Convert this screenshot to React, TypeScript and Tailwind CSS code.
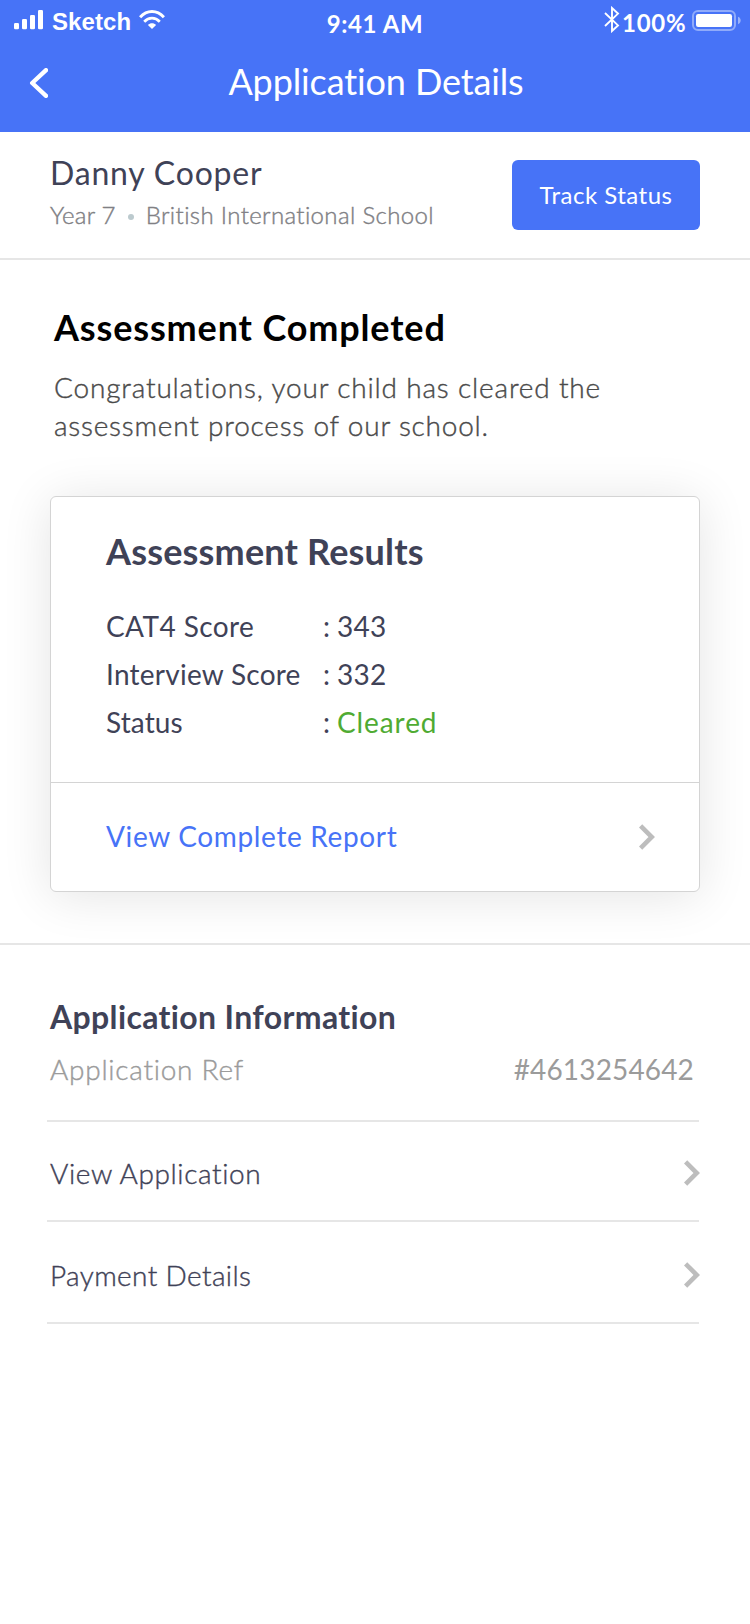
function ChevronRight() {
  return (
    <svg className="block h-[26px] w-4 shrink-0" viewBox="0 0 16 26" fill="none">
      <path d="M1.6 1.8L12.8 13L1.6 24.2" stroke="#bdbdbd" strokeWidth="4.6" />
    </svg>
  );
}

function SignalIcon() {
  return (
    <svg className="mt-[10px] block h-5 w-[30px]" viewBox="0 0 30 20" fill="#fff">
      <rect x="0" y="13" width="5" height="6.3" rx="1.2" />
      <rect x="8" y="9" width="5" height="10.3" rx="1.2" />
      <rect x="16" y="5" width="5" height="14.3" rx="1.2" />
      <rect x="24" y="0" width="5" height="19.3" rx="1.2" />
    </svg>
  );
}

function WifiIcon() {
  return (
    <svg className="mt-[10px] block h-5 w-[26px]" viewBox="0 0 26 20" fill="none">
      <path d="M1.1 7.3C8 -0.4 18 -0.4 24.9 7.3" stroke="#fff" strokeWidth="2.9" />
      <path d="M5.2 11.8C9.8 7 16.2 7 20.8 11.8" stroke="#fff" strokeWidth="2.7" />
      <path d="M8.9 15C11.2 12.5 14.8 12.5 17.1 15L13 19Z" fill="#fff" />
    </svg>
  );
}

function BluetoothIcon() {
  return (
    <svg className="mt-[6px] block h-[27px] w-4" viewBox="0 0 16 27" fill="none">
      <path d="M1 7L14 19.4L8 25V2L14 7.6L1 20" stroke="#fff" strokeWidth="1.9" />
    </svg>
  );
}

function BatteryIcon() {
  return (
    <svg className="mt-[10px] block h-[21px] w-[50px]" viewBox="0 0 50 21" fill="none">
      <rect x="1" y="1" width="42" height="19" rx="5" stroke="#fff" strokeOpacity="0.4" strokeWidth="2" />
      <rect x="4" y="4" width="36" height="13" rx="2.2" fill="#fff" />
      <path d="M46 6.8C49.6 8 49.6 13 46 14.2Z" fill="#fff" fillOpacity="0.45" />
    </svg>
  );
}

const results = [
  { label: "CAT4 Score", value: "343", labelClass: "tracking-[0.41px]", valueClass: "tracking-[0.3px]" },
  { label: "Interview Score", value: "332", labelClass: "tracking-[0.25px]", valueClass: "tracking-[0.3px]" },
  { label: "Status", value: "Cleared", labelClass: "tracking-[0.1px]", valueClass: "tracking-[0.9px] text-[#4fab33]" },
];

export default function App() {
  return (
    <div className="min-h-[1624px] w-[750px] bg-white font-['Lato','Open_Sans',sans-serif] text-[#3f4257]">
      <header className="h-[132px] bg-[#4773f7] text-white">
        <div className="grid h-11 grid-cols-[1fr_auto_1fr] text-2xl leading-6">
          <div className="flex items-start pl-[14px]">
            <SignalIcon />
            <span className="mt-[10px] ml-2 w-[87px] font-['Liberation_Sans',sans-serif] text-2xl leading-6 font-bold tracking-[0.1px]">
              Sketch
            </span>
            <WifiIcon />
          </div>
          <div className="mt-3 font-bold tracking-[0.6px]">9:41 AM</div>
          <div className="flex items-start justify-end pr-2">
            <BluetoothIcon />
            <span className="mt-[11px] ml-[2px] w-[70px] font-bold tracking-[0.75px]">100%</span>
            <BatteryIcon />
          </div>
        </div>
        <div className="grid grid-cols-[100px_1fr_100px]">
          <button className="flex pt-6 pl-7">
            <svg className="block h-[30px] w-5" viewBox="0 0 20 30" fill="none">
              <path
                d="M18 2.2L4.2 15L18 27.8"
                stroke="#fff"
                strokeWidth="4.4"
                strokeLinecap="round"
                strokeLinejoin="round"
              />
            </svg>
          </button>
          <h1 className="mt-[15px] pl-[2px] text-center text-4xl leading-[44px] font-normal tracking-[-0.12px] [font-variant-ligatures:none]">
            Application Details
          </h1>
        </div>
      </header>

      <section className="flex h-32 justify-between border-b-2 border-[#e6e6e6] pr-[50px] pl-[50px]">
        <div className="pt-[21px]">
          <h2 className="text-[32px] leading-10 font-normal tracking-[0.8px]">Danny Cooper</h2>
          <div className="mt-[6px] flex items-center text-2xl leading-8 font-light text-[#808084] [-webkit-text-stroke:0.4px]">
            <span className="tracking-[0.25px]">Year 7</span>
            <span className="mx-3 mt-[3px] size-1.5 rounded-full bg-[#bccace]" />
            <span className="tracking-[0.36px]">British International School</span>
          </div>
        </div>
        <button className="mt-7 h-[70px] w-[188px] rounded-md bg-[#4773f7] text-2xl leading-8 font-normal tracking-[0.49px] text-white">
          Track Status
        </button>
      </section>

      <section className="border-b-2 border-[#e6e6e6] px-[50px] pt-[45px] pb-[51px]">
        <h2 className="pl-1 text-4xl leading-[44px] font-bold tracking-[0.85px] text-black">Assessment Completed</h2>
        <p className="mt-[19px] pl-1 text-[28px] leading-[38px] font-light tracking-[0.83px] text-[#4a4a4a] [-webkit-text-stroke:0.4px]">
          Congratulations, your child has cleared the
          <br />
          <span className="tracking-[0.79px]">assessment process of our school.</span>
        </p>
        <div className="mt-[52px] h-[396px] rounded-md border border-[#d4d4d4] bg-white shadow-[0_4px_50px_rgba(0,0,0,0.11)]">
          <div className="h-[285px] pt-8 pl-[55px]">
            <h3 className="text-4xl leading-[44px] font-bold tracking-[0.18px]">Assessment Results</h3>
            <dl className="mt-[29px] text-[28px] leading-[48px] font-normal">
              {results.map((r) => (
                <div key={r.label} className="flex">
                  <dt className={`w-[217px] ${r.labelClass}`}>{r.label}</dt>
                  <dd className="flex">
                    <span className="w-[14px]">:</span>
                    <span className={r.valueClass}>{r.value}</span>
                  </dd>
                </div>
              ))}
            </dl>
          </div>
          <a className="flex h-[109px] items-center justify-between border-t border-[#d4d4d4] pr-[44px] pl-[55px] text-[28px] leading-10 text-[#4773f7]">
            <span className="-mt-[2px] tracking-[0.65px]">View Complete Report</span>
            <ChevronRight />
          </a>
        </div>
      </section>

      <section className="pr-[51px] pl-[47px]">
        <h2 className="pt-[52px] pl-[3px] text-[32px] leading-10 font-bold tracking-[0.36px]">
          Application Information
        </h2>
        <div className="flex justify-between border-b-2 border-[#e6e6e6] pt-3 pr-[5px] pb-[31px] pl-[3px] text-[28px] leading-10 text-[#9b9b9b]">
          <span className="font-light tracking-[0.75px] [-webkit-text-stroke:0.4px]">Application Ref</span>
          <span className="font-normal tracking-[0.15px]">#4613254642</span>
        </div>
        <a className="flex h-[100px] items-center justify-between border-b-2 border-[#e6e6e6] pt-1 pl-[3px] text-[28px] leading-10 font-light">
          <span className="tracking-[0.6px] [-webkit-text-stroke:0.4px]">View Application</span>
          <span className="-mr-[1px]">
            <ChevronRight />
          </span>
        </a>
        <a className="flex h-[102px] items-center justify-between border-b-2 border-[#e6e6e6] pt-[6px] pl-[3px] text-[28px] leading-10 font-light">
          <span className="tracking-[0.37px] [-webkit-text-stroke:0.4px]">Payment Details</span>
          <span className="-mr-[1px]">
            <ChevronRight />
          </span>
        </a>
      </section>
    </div>
  );
}
